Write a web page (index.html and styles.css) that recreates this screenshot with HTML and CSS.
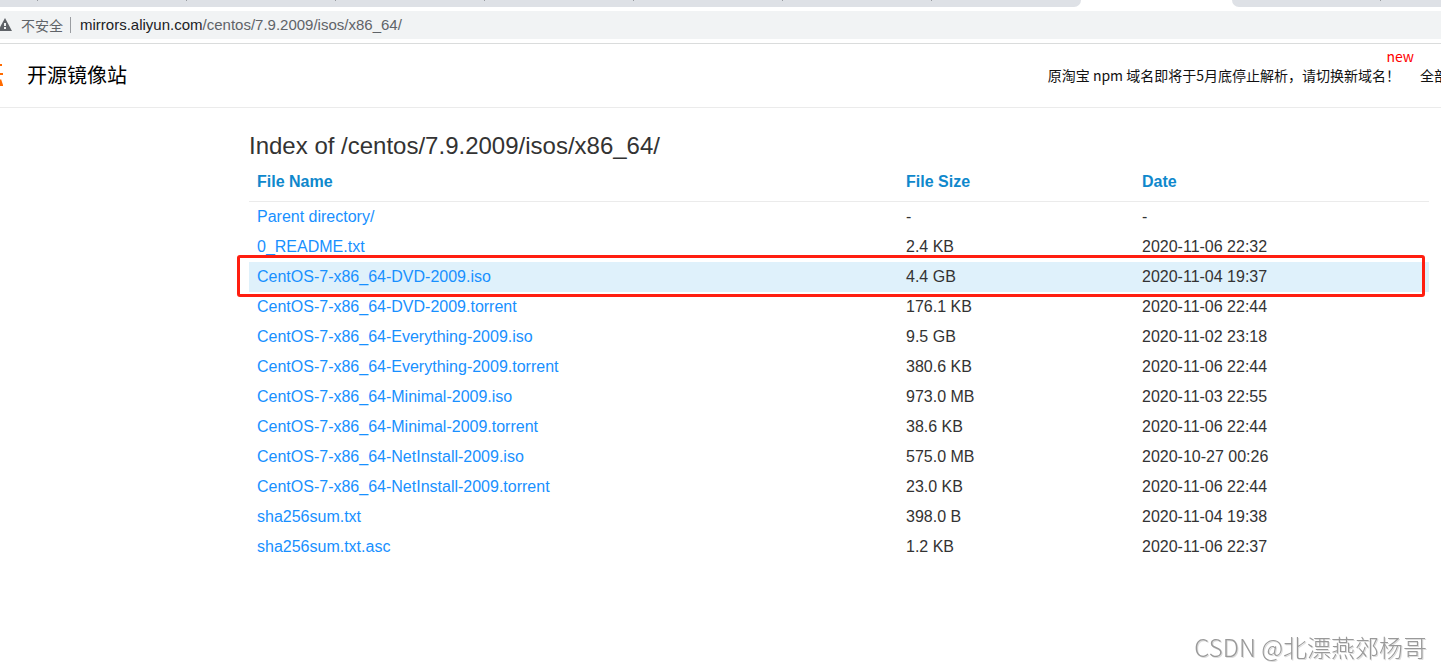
FILE: index.html
```html
<!DOCTYPE html>
<html lang="zh-CN">
<head>
<meta charset="utf-8">
<title>Index of /centos/7.9.2009/isos/x86_64/</title>
<link rel="stylesheet" href="styles.css">
</head>
<body>
<div class="browser">
  <div class="tabs">
    <div class="tabs-before"><i></i><i></i><i></i><i></i><i></i><i></i><i></i></div>
    <div class="tabs-after"><i></i></div>
  </div>
  <div class="address">
    <svg class="warning" viewBox="0 0 14 14" aria-hidden="true"><path d="M7 0 14 13H0Z" fill="#5f6368"/><path d="M6 5h2v3H6zM6 9h2v2H6z" fill="#f1f3f4"/></svg>
    <span class="security">不安全</span>
    <span class="url"><b>mirrors.aliyun.com</b>/centos/7.9.2009/isos/x86_64/</span>
  </div>
</div>
<header class="header">
  <svg class="logo" viewBox="0 0 4 24" aria-hidden="true"><path d="M0 1H2V3H0zM0 10H3V12H0zM0 17 1 16 3 22V23H0z" fill="#ff6a00"/></svg>
  <span class="site">开源镜像站</span>
  <nav class="nav">
    <a href="#" class="notice">原淘宝 npm 域名即将于5月底停止解析，请切换新域名！<span class="new">new</span></a>
    <a href="#" class="all">全部</a>
  </nav>
</header>
<main class="main">
  <h1 class="title">Index of /centos/7.9.2009/isos/x86_64/</h1>
  <div class="listing">
    <table class="files">
      <thead><tr><th class="name">File Name</th><th class="size">File Size</th><th>Date</th></tr></thead>
      <tbody>
        <tr><td><a href="#">Parent directory/</a></td><td>-</td><td>-</td></tr>
        <tr><td><a href="#">0_README.txt</a></td><td>2.4 KB</td><td>2020-11-06 22:32</td></tr>
        <tr class="active"><td><a href="#">CentOS-7-x86_64-DVD-2009.iso</a></td><td>4.4 GB</td><td>2020-11-04 19:37</td></tr>
        <tr><td><a href="#">CentOS-7-x86_64-DVD-2009.torrent</a></td><td>176.1 KB</td><td>2020-11-06 22:44</td></tr>
        <tr><td><a href="#">CentOS-7-x86_64-Everything-2009.iso</a></td><td>9.5 GB</td><td>2020-11-02 23:18</td></tr>
        <tr><td><a href="#">CentOS-7-x86_64-Everything-2009.torrent</a></td><td>380.6 KB</td><td>2020-11-06 22:44</td></tr>
        <tr><td><a href="#">CentOS-7-x86_64-Minimal-2009.iso</a></td><td>973.0 MB</td><td>2020-11-03 22:55</td></tr>
        <tr><td><a href="#">CentOS-7-x86_64-Minimal-2009.torrent</a></td><td>38.6 KB</td><td>2020-11-06 22:44</td></tr>
        <tr><td><a href="#">CentOS-7-x86_64-NetInstall-2009.iso</a></td><td>575.0 MB</td><td>2020-10-27 00:26</td></tr>
        <tr><td><a href="#">CentOS-7-x86_64-NetInstall-2009.torrent</a></td><td>23.0 KB</td><td>2020-11-06 22:44</td></tr>
        <tr><td><a href="#">sha256sum.txt</a></td><td>398.0 B</td><td>2020-11-04 19:38</td></tr>
        <tr><td><a href="#">sha256sum.txt.asc</a></td><td>1.2 KB</td><td>2020-11-06 22:37</td></tr>
      </tbody>
    </table>
    <div class="marker"></div>
  </div>
</main>
<div class="watermark">CSDN @北漂燕郊杨哥</div>
</body>
</html>
```
FILE: styles.css
```css
* { box-sizing: border-box; }
body {
  margin: 0;
  min-height: 100vh;
  background: #fff;
  color: #333;
  font: 16px/24px "Liberation Sans", "Noto Sans CJK SC", sans-serif;
  overflow-x: hidden;
}
a { color: #1890ff; text-decoration: none; }

.browser { border-bottom: 1px solid #dadcdc; padding-bottom: 4px; }
.tabs { display: flex; justify-content: space-between; height: 7px; margin-bottom: 4px; }
.tabs-before, .tabs-after { display: flex; background: #dee1e6; }
.tabs-before { width: 75%; padding-left: 37px; gap: 148px; border-bottom-right-radius: 8px; }
.tabs-after { width: 209px; padding-left: 148px; border-bottom-left-radius: 8px; }
.tabs i { width: 1px; height: 1px; background: #999ca1; }
.address {
  display: flex;
  align-items: center;
  height: 28px;
  background: #f1f3f4;
  color: #5f6368;
  overflow: hidden;
  white-space: nowrap;
}
.warning { width: 14px; height: 14px; margin-left: -2px; flex: none; }
.security {
  margin-left: 9px;
  padding-right: 7px;
  border-right: 1px solid #9a9da1;
  font: 14px/16px "Noto Sans CJK SC", sans-serif;
}
.url { margin-left: 9px; font: 15px/24px "Liberation Sans", sans-serif; }
.url b { font-weight: 400; color: #202124; }

.header {
  display: flex;
  align-items: center;
  height: 64px;
  padding-bottom: 2px;
  border-bottom: 1px solid #ebebeb;
  overflow: hidden;
  white-space: nowrap;
  color: #000;
}
.logo { width: 4px; height: 24px; margin-right: 23px; flex: none; }
.site { font: 20px/28px "Noto Sans CJK SC", sans-serif; }
.nav { display: flex; gap: 20px; margin-left: auto; margin-right: -7px; font: 14px/20px "Noto Sans CJK SC", sans-serif; }
.nav a { color: #111; }
.notice { position: relative; }
.notice .new { position: absolute; right: -14px; top: -19px; color: #f00; }

.main { max-width: 1180px; margin: 22px 12px 0 auto; }
.title { margin: 0; font-size: 24px; line-height: 32px; font-weight: 400; }
.listing { position: relative; }
.files { width: 100%; table-layout: fixed; border-collapse: separate; border-spacing: 0; }
.files th { height: 40px; padding: 0 8px; text-align: left; color: #0f88cc; border-bottom: 1px solid #ebebeb; }
.files td { height: 30px; padding: 0 8px; }
.files .name { width: 55%; }
.files .size { width: 20%; }
.files .active { background: #dff1fb; }
.marker {
  position: absolute;
  top: 93px;
  left: -12px;
  right: 4px;
  height: 42px;
  border: 3px solid #ff1e10;
  border-radius: 3px;
  pointer-events: none;
}
.watermark {
  position: fixed;
  right: 14px;
  bottom: 6px;
  color: #999;
  font: 300 24px/32px "Noto Sans CJK SC", sans-serif;
  text-shadow: 1px 1px 0 #ddd;
}
```
